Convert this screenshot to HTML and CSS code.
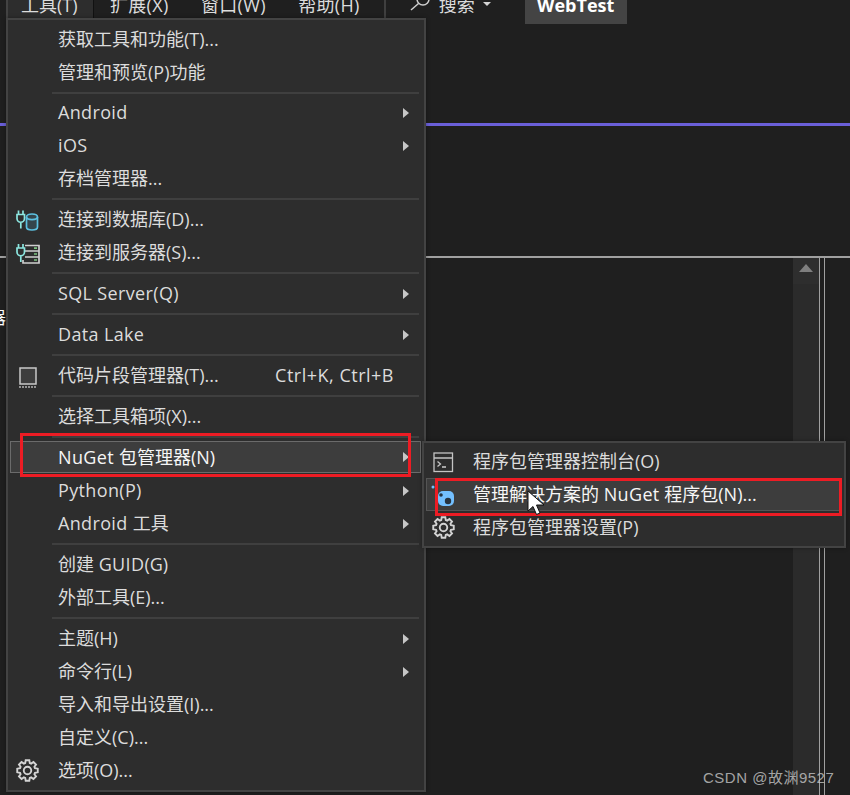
FILE: index.html
```html
<!DOCTYPE html>
<html lang="zh-CN">
<head>
<meta charset="utf-8">
<title>NuGet 包管理器</title>
<link rel="stylesheet" href="styles.css">
</head>
<body>
<svg class="defs" width="0" height="0" aria-hidden="true">
  <symbol id="gear" viewBox="-12 -12 24 24">
    <path class="gear-line" d="M-1.74-9.85L1.74-9.85L2.19-7.17L3.52-6.62L5.74-8.19L8.19-5.74L6.62-3.52L7.17-2.19L9.85-1.74L9.85 1.74L7.17 2.19L6.62 3.52L8.19 5.74L5.74 8.19L3.52 6.62L2.19 7.17L1.74 9.85L-1.74 9.85L-2.19 7.17L-3.52 6.62L-5.74 8.19L-8.19 5.74L-6.62 3.52L-7.17 2.19L-9.85 1.74L-9.85-1.74L-7.17-2.19L-6.62-3.52L-8.19-5.74L-5.74-8.19L-3.52-6.62L-2.19-7.17Z"/>
    <circle class="gear-line" r="3.6"/>
  </symbol>
</svg>
<div class="stage">
  <header class="menubar">
    <div class="tab">工具(T)</div>
    <div class="top-items">
      <span>扩展(X)</span>
      <span>窗口(W)</span>
      <span>帮助(H)</span>
    </div>
    <div class="top-sep"></div>
    <svg class="search-icon" width="22" height="22" viewBox="0 0 22 22"><circle cx="15" cy="7" r="6"/><path d="M10.5 11.5L3 18"/></svg>
    <span class="search-label">搜索</span>
    <span class="caret"></span>
    <div class="project">WebTest</div>
  </header>
  <div class="accent"></div>
  <div class="rule"></div>
  <main class="editor">
    <div class="pane"><span class="clipped">器</span></div>
    <div class="scrollbar"><div class="scroll-up"><span class="up-arrow"></span></div></div>
    <div class="split"></div>
    <div class="far"></div>
  </main>

  <nav class="menu main-menu">
    <div class="row"><span class="icon"></span><span class="label">获取工具和功能(T)...</span><span class="end"></span></div>
    <div class="row"><span class="icon"></span><span class="label">管理和预览(P)功能</span><span class="end"></span></div>
    <div class="sep sep-first"></div>
    <div class="row"><span class="icon"></span><span class="label en">Android</span><span class="end"><i class="arrow"></i></span></div>
    <div class="row"><span class="icon"></span><span class="label en">iOS</span><span class="end"><i class="arrow"></i></span></div>
    <div class="row"><span class="icon"></span><span class="label">存档管理器...</span><span class="end"></span></div>
    <div class="sep"></div>
    <div class="row"><span class="icon">
      <svg width="24" height="24" viewBox="0 0 24 24"><path class="cyan" d="M2.5 2.5v4M7 2.5v4M1 6.5h7.5v4a3.7 3.7 0 0 1-7.5 0zM4.8 14.5v6"/><path class="db" d="M10.5 9c0-4 11-4 11 0v10c0 4-11 4-11 0z"/><path class="db-line" d="M10.5 9c0 3.4 11 3.4 11 0"/></svg>
    </span><span class="label">连接到数据库(D)...</span><span class="end"></span></div>
    <div class="row"><span class="icon">
      <svg width="24" height="24" viewBox="0 0 24 24"><path class="srv" d="M9 4.500h14v5.500H9M23 10v6H9M23 16v6H7v-3"/><path class="led" d="M18 7.200h3M18 13h3M18 19h3"/><path class="cyan cyan-fill" d="M2.500 3v4M7 3v4M1 7h7.500v4a3.700 3.700 0 0 1-7.500 0zM4.800 15v6"/></svg>
    </span><span class="label">连接到服务器(S)...</span><span class="end"></span></div>
    <div class="sep"></div>
    <div class="row"><span class="icon"></span><span class="label en">SQL Server(Q)</span><span class="end"><i class="arrow"></i></span></div>
    <div class="sep"></div>
    <div class="row"><span class="icon"></span><span class="label en">Data Lake</span><span class="end"><i class="arrow"></i></span></div>
    <div class="sep"></div>
    <div class="row"><span class="icon">
      <svg width="24" height="24" viewBox="0 0 24 24"><rect class="snippet" x="4" y="4" width="16" height="16"/><path class="snippet-dots" d="M3 23h18"/></svg>
    </span><span class="label">代码片段管理器(T)...</span><span class="shortcut">Ctrl+K, Ctrl+B</span><span class="end"></span></div>
    <div class="sep"></div>
    <div class="row"><span class="icon"></span><span class="label">选择工具箱项(X)...</span><span class="end"></span></div>
    <div class="sep"></div>
    <div class="row active"><span class="icon"></span><span class="label"><span class="en">NuGet </span>包管理器(N)</span><span class="end"><i class="arrow"></i></span></div>
    <div class="row"><span class="icon"></span><span class="label en">Python(P)</span><span class="end"><i class="arrow"></i></span></div>
    <div class="row"><span class="icon"></span><span class="label"><span class="en">Android </span>工具</span><span class="end"><i class="arrow"></i></span></div>
    <div class="sep"></div>
    <div class="row"><span class="icon"></span><span class="label">创建 <span class="en">GUID</span>(G)</span><span class="end"></span></div>
    <div class="row"><span class="icon"></span><span class="label">外部工具(E)...</span><span class="end"></span></div>
    <div class="sep"></div>
    <div class="row"><span class="icon"></span><span class="label">主题(H)</span><span class="end"><i class="arrow"></i></span></div>
    <div class="row"><span class="icon"></span><span class="label">命令行(L)</span><span class="end"><i class="arrow"></i></span></div>
    <div class="row"><span class="icon"></span><span class="label">导入和导出设置(I)...</span><span class="end"></span></div>
    <div class="row"><span class="icon"></span><span class="label">自定义(C)...</span><span class="end"></span></div>
    <div class="row"><span class="icon"><svg class="gear" width="25" height="25"><use href="#gear"/></svg></span><span class="label">选项(O)...</span><span class="end"></span></div>
  </nav>

  <nav class="menu sub-menu">
    <div class="row"><span class="icon">
      <svg width="22" height="22" viewBox="0 0 22 22"><rect class="console" x="2" y="2" width="18.500" height="18.500"/><path class="console" d="M2 7h18.500M5.500 10.500l3 2.500-3 2.500"/><path class="console-bright" d="M10 16h4"/></svg>
    </span><span class="label">程序包管理器控制台(O)</span></div>
    <div class="row active"><span class="icon">
      <svg width="24" height="24" viewBox="0 0 24 24"><circle class="nuget" cx="2" cy="4" r="1.500"/><rect class="nuget" x="7" y="8" width="16" height="15" rx="5"/><circle class="nuget-dot" cx="10" cy="12" r="1.800"/><circle class="nuget-dot" cx="17" cy="18" r="3.200"/></svg>
    </span><span class="label">管理解决方案的 <span class="en">NuGet</span> 程序包(N)...</span></div>
    <div class="row"><span class="icon"><svg class="gear" width="25" height="25"><use href="#gear"/></svg></span><span class="label">程序包管理器设置(P)</span></div>
  </nav>

  <div class="mark mark-a"></div>
  <div class="mark mark-b"></div>
  <svg class="cursor" width="20" height="26" viewBox="0 0 20 26"><path d="M1 1v20l5-4.500 3.500 8 3.500-1.500-3.500-8H17z"/></svg>
  <div class="watermark">CSDN @故渊9527</div>
</div>
</body>
</html>
```
FILE: styles.css
```css
* { box-sizing: border-box; }
html, body { margin: 0; padding: 0; background: #1f1f1f; }
.defs { position: absolute; }
.stage {
  position: relative;
  width: 850px;
  height: 795px;
  overflow: hidden;
  background: #1f1f1f;
  color: #dcdcdc;
  font-family: "Open Sans", "Noto Sans CJK SC", sans-serif;
  font-size: 18px;
}
.en { letter-spacing: .35px; }

/* top bar, cropped by the top of the shot */
.menubar {
  display: flex;
  align-items: flex-start;
  height: 32px;
  margin-top: -8px;
  line-height: 26px;
}
.tab {
  width: 88px;
  height: 26px;
  margin-left: 6px;
  padding-left: 13px;
  background: #2d2d2d;
  border-left: 2px solid #434343;
  border-right: 1px solid #111;
}
.top-items { display: flex; gap: 32.5px; margin-left: 16px; letter-spacing: .3px; }
.top-sep { width: 2px; height: 26px; margin-left: 24px; background: #3f3f3f; }
.search-icon { margin-left: 22px; fill: none; stroke: #cfcfcf; stroke-width: 1.5; }
.search-label { margin-left: 9px; }
.caret {
  width: 0;
  height: 0;
  margin: 10px 0 0 8px;
  border-style: solid;
  border-width: 4px 4px 0;
  border-color: #d4d4d4 transparent transparent;
}
.project {
  width: 102px;
  height: 32px;
  margin-left: 34px;
  background: #444;
  color: #fff;
  font-weight: 700;
  text-align: center;
}

/* workspace */
.accent { height: 3px; margin-top: 99px; background: #6a5fd8; }
.rule { height: 2px; margin-top: 130px; background: #a0a0a0; }
.editor { display: flex; height: 537px; }
.pane { flex: 1; position: relative; overflow: hidden; }
.clipped {
  position: absolute;
  left: -11px;
  top: 46px;
  color: #fff;
  font-size: 17px;
}
.scrollbar { width: 26px; background: #2b2b2b; }
.scroll-up {
  display: flex;
  align-items: center;
  justify-content: center;
  height: 26px;
  background: #2e2e2e;
}
.up-arrow {
  width: 0;
  height: 0;
  margin-bottom: 6px;
  border-style: solid;
  border-width: 0 7px 8px;
  border-color: transparent transparent #7f7f7f;
}
.split { width: 6px; border-left: 1px solid #a0a0a0; border-right: 1px solid #a0a0a0; }
.far { width: 25px; }

/* menus */
.menu {
  position: absolute;
  background: #2d2d2d;
  border: 2px solid #434343;
  box-shadow: 0 0 4px rgba(0, 0, 0, .35);
}
.main-menu { left: 6px; top: 18px; width: 420px; height: 774px; padding: 3px 0; }
.sub-menu { left: 422px; top: 441px; width: 424px; height: 107px; padding: 2px 0; }
.row { display: flex; align-items: center; height: 33px; line-height: 33px; }
.icon { display: flex; align-items: center; flex: none; width: 50px; padding-left: 8px; }
.label { flex: 1; white-space: nowrap; }
.shortcut { white-space: nowrap; letter-spacing: .5px; }
.end { display: flex; align-items: center; flex: none; width: 30px; padding-left: 9px; }
.arrow {
  width: 0;
  height: 0;
  border-style: solid;
  border-width: 5px 0 5px 6px;
  border-color: transparent transparent transparent #c6c6c6;
}
.sep { height: 8px; padding: 3px 5px 3px 44px; }
.sep::before { content: ""; display: block; height: 2px; background: #3f3f3f; }
.sep-first { height: 7px; }

.row.active {
  margin: 0 3px 0 2px;
  background: #3d3d3d;
  border: 1px solid #6b6b6b;
  color: #f6f6f6;
}
.main-menu .active { height: 32px; margin-bottom: 1px; }
.main-menu .active .icon { width: 47px; }
.main-menu .active .end { width: 26px; }

.sub-menu .icon { width: 49px; }
.sub-menu .active { margin-right: 4px; border-color: #555; }
.sub-menu .active .icon { width: 46px; padding-left: 4px; }

/* icons */
.icon svg { display: block; flex: none; }
.gear-line { fill: none; stroke: #d4d4d4; stroke-width: 1.800; stroke-linejoin: miter; }
.main-menu .gear { margin-left: -1px; }
.sub-menu .gear { margin-left: -1.500px; }
.cyan { fill: none; stroke: #8ce6e0; stroke-width: 1.700; }
.cyan-fill { fill: #2d2d2d; }
.db { fill: #34454c; stroke: #5cc0e0; stroke-width: 1.700; }
.db-line { fill: none; stroke: #5cc0e0; stroke-width: 1.700; }
.srv { fill: none; stroke: #cfcfcf; stroke-width: 1.700; }
.led { fill: none; stroke: #7bc47f; stroke-width: 1.700; }
.snippet { fill: #3d3d3d; stroke: #c8c8c8; stroke-width: 1.500; }
.snippet-dots { fill: none; stroke: #b5b5b5; stroke-width: 1.500; stroke-dasharray: 2 1; }
.console { fill: none; stroke: #c4c4c4; stroke-width: 1.300; }
.console-bright { fill: none; stroke: #e8e8e8; stroke-width: 1.300; }
.nuget { fill: #73c0ff; }
.nuget-dot { fill: #263340; }

/* annotations over the screenshot */
.mark { position: absolute; border: 3px solid #ed1c24; }
.mark-a { left: 20px; top: 433px; width: 391px; height: 44px; }
.mark-b { left: 435px; top: 478px; width: 407px; height: 38px; }
.cursor {
  position: absolute;
  left: 527px;
  top: 490px;
  fill: #fff;
  stroke: #111;
  stroke-width: 1;
}
.watermark {
  position: absolute;
  left: 703px;
  top: 767px;
  color: rgba(200, 200, 200, .8);
  font-family: "Liberation Sans", "Noto Sans CJK SC", sans-serif;
  font-size: 15px;
  line-height: 22px;
  letter-spacing: .5px;
  white-space: nowrap;
}
```
